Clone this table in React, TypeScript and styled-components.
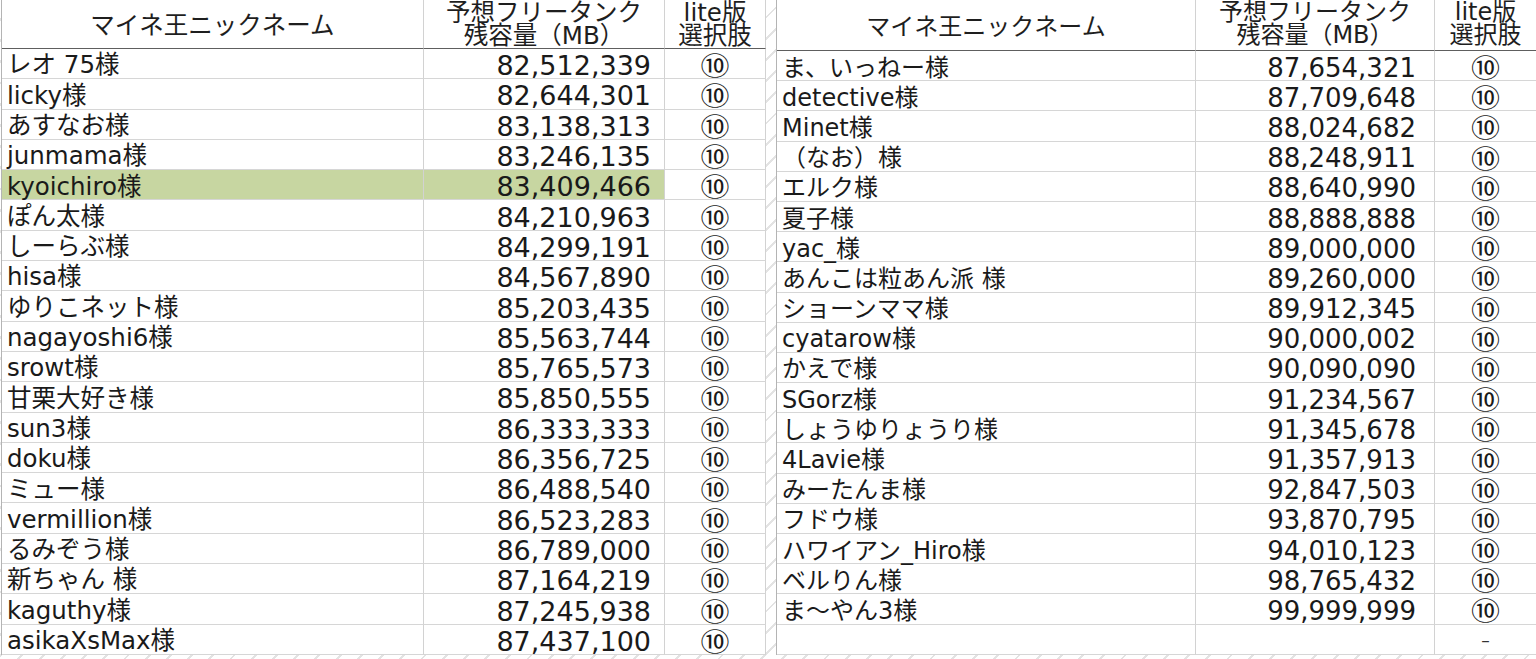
import React from "react";
import styled, { createGlobalStyle } from "styled-components";

const GlobalStyle = createGlobalStyle`
  html, body {
    margin: 0;
    padding: 0;
    overflow: hidden;
    width: 1536px;
    height: 659px;
    background-color: #ffffff;
    background-image: repeating-linear-gradient(
      135deg,
      rgba(0, 0, 0, 0) 0px,
      rgba(0, 0, 0, 0) 13px,
      #e3e3e3 13px,
      #e3e3e3 15px
    );
  }
  body {
    font-family: "DejaVu Sans", "Noto Sans CJK JP", sans-serif;
    color: #1a1a1a;
  }
`;

const Page = styled.div`
  display: flex;
  align-items: flex-start;
  gap: 10px;
  padding-left: 1px;
  height: 659px;
  overflow: hidden;
`;

type SheetProps = { $cols: string; $head: number; $row: number };

const Sheet = styled.div<SheetProps>`
  display: grid;
  grid-template-columns: ${(p) => p.$cols};
  grid-template-rows: ${(p) => p.$head}px;
  grid-auto-rows: ${(p) => p.$row}px;
  border-left: 1px solid #b4b4b4;
  background: #ffffff;
  flex: none;
`;

const HeaderCell = styled.div<{ $size: number }>`
  box-sizing: border-box;
  border-right: 1px solid #d2d2d2;
  border-bottom: 1px solid #5e5e5e;
  display: flex;
  flex-direction: column;
  align-items: center;
  justify-content: flex-start;
  padding-top: 1px;
  font-size: ${(p) => p.$size}px;
  color: #1e1e1e;
  text-align: center;
  white-space: nowrap;
`;

const HeaderLine = styled.span`
  display: block;
  height: 23px;
  line-height: 23px;
`;

const SingleHeader = styled(HeaderCell)`
  justify-content: center;
  padding-top: 4px;
  line-height: 1.2;
`;

const Cell = styled.div<{ $hl?: boolean }>`
  box-sizing: border-box;
  border-right: 1px solid #d2d2d2;
  border-bottom: 1px solid #d6d6d6;
  background: ${(p) => (p.$hl ? "#c7d6a1" : "transparent")};
  display: flex;
  align-items: center;
  white-space: nowrap;
  padding-top: 4px;
  line-height: 1;
`;

const NameCell = styled(Cell)<{ $size: number }>`
  padding-left: 5px;
  font-size: ${(p) => p.$size}px;
`;

const NumCell = styled(Cell)<{ $size: number; $pad: number }>`
  justify-content: flex-end;
  padding-right: ${(p) => p.$pad}px;
  font-size: ${(p) => p.$size}px;
`;

const ChoiceCell = styled(Cell)`
  justify-content: center;
  padding-top: 2px;
`;

const Circled = styled.span`
  display: inline-block;
  font-family: "Noto Sans CJK JP", sans-serif;
  font-size: 29px;
  line-height: 1;
  color: #1a1a1a;
  transform: scaleY(0.86);
`;

const Dash = styled.span`
  font-family: "DejaVu Sans", sans-serif;
  font-size: 17px;
  line-height: 1;
  color: #333;
`;

type Row = [string, string, boolean?];

const leftRows: Row[] = [
  ["レオ 75様", "82,512,339"],
  ["licky様", "82,644,301"],
  ["あすなお様", "83,138,313"],
  ["junmama様", "83,246,135"],
  ["kyoichiro様", "83,409,466", true],
  ["ぽん太様", "84,210,963"],
  ["しーらぶ様", "84,299,191"],
  ["hisa様", "84,567,890"],
  ["ゆりこネット様", "85,203,435"],
  ["nagayoshi6様", "85,563,744"],
  ["srowt様", "85,765,573"],
  ["甘栗大好き様", "85,850,555"],
  ["sun3様", "86,333,333"],
  ["doku様", "86,356,725"],
  ["ミュー様", "86,488,540"],
  ["vermillion様", "86,523,283"],
  ["るみぞう様", "86,789,000"],
  ["新ちゃん 様", "87,164,219"],
  ["kaguthy様", "87,245,938"],
  ["asikaXsMax様", "87,437,100"],
];

const rightRows: Row[] = [
  ["ま、いっねー様", "87,654,321"],
  ["detective様", "87,709,648"],
  ["Minet様", "88,024,682"],
  ["（なお）様", "88,248,911"],
  ["エルク様", "88,640,990"],
  ["夏子様", "88,888,888"],
  ["yac_様", "89,000,000"],
  ["あんこは粒あん派 様", "89,260,000"],
  ["ショーンママ様", "89,912,345"],
  ["cyatarow様", "90,000,002"],
  ["かえで様", "90,090,090"],
  ["SGorz様", "91,234,567"],
  ["しょうゆりょうり様", "91,345,678"],
  ["4Lavie様", "91,357,913"],
  ["みーたんま様", "92,847,503"],
  ["フドウ様", "93,870,795"],
  ["ハワイアン_Hiro様", "94,010,123"],
  ["ベルりん様", "98,765,432"],
  ["ま〜やん3様", "99,999,999"],
  ["", ""],
];

type TableProps = {
  rows: Row[];
  cols: string;
  head: number;
  row: number;
  nameSize: number;
  numSize: number;
  headSize: number;
  numPad: number;
};

function RankTable({ rows, cols, head, row, nameSize, numSize, headSize, numPad }: TableProps) {
  return (
    <Sheet $cols={cols} $head={head} $row={row}>
      <SingleHeader $size={headSize}>マイネ王ニックネーム</SingleHeader>
      <HeaderCell $size={headSize}>
        <HeaderLine>予想フリータンク</HeaderLine>
        <HeaderLine>残容量（MB）</HeaderLine>
      </HeaderCell>
      <HeaderCell $size={headSize}>
        <HeaderLine>lite版</HeaderLine>
        <HeaderLine>選択肢</HeaderLine>
      </HeaderCell>
      {rows.map(([name, num, hl], i) => {
        const empty = name === "";
        return (
          <React.Fragment key={i}>
            <NameCell $size={nameSize} $hl={hl}>{name}</NameCell>
            <NumCell $size={numSize} $pad={numPad} $hl={hl}>{num}</NumCell>
            <ChoiceCell>{empty ? <Dash>–</Dash> : <Circled>⑩</Circled>}</ChoiceCell>
          </React.Fragment>
        );
      })}
    </Sheet>
  );
}

export default function App() {
  return (
    <>
      <GlobalStyle />
      <Page>
        <RankTable
          rows={leftRows}
          cols="422px 241px 101px"
          head={49}
          row={30.3}
          nameSize={24.5}
          numSize={27}
          headSize={24.5}
          numPad={13}
        />
        <RankTable
          rows={rightRows}
          cols="419px 239px 102px"
          head={51}
          row={30.2}
          nameSize={24}
          numSize={26}
          headSize={24}
          numPad={18}
        />
      </Page>
    </>
  );
}
